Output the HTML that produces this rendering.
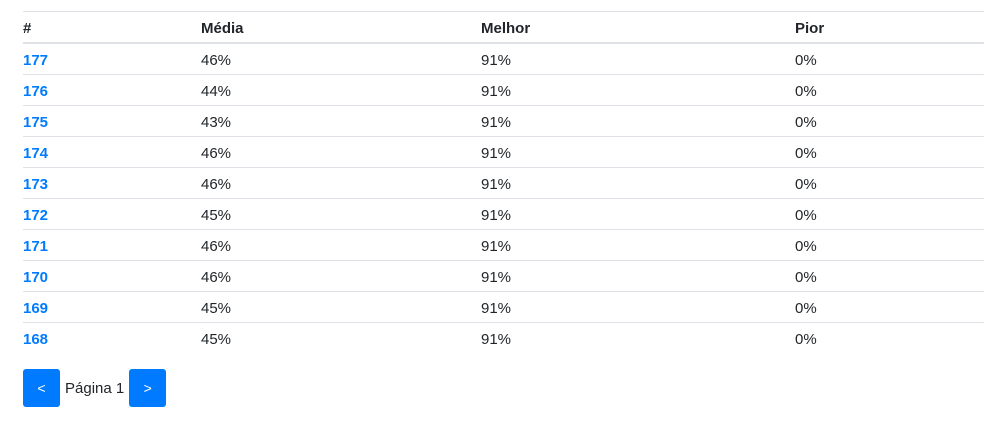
<!DOCTYPE html>
<html><head><meta charset="utf-8"><style>
body{margin:0;background:#fff;font-family:"Liberation Sans",Arial,sans-serif;font-size:15px;color:#212529;}
table{position:absolute;left:23px;top:11px;width:961px;border-collapse:collapse;}
td,th{height:27px;line-height:27px;padding:3px 0 0 0;text-align:left;border-top:1px solid #dee2e6;vertical-align:top;}
th{font-weight:bold;border-bottom:2px solid #dee2e6;}
tr.first td{border-top:0;}
td a{color:#007bff;font-weight:bold;text-decoration:none;}
.c1{width:178px}.c2{width:280px}.c3{width:314px}
.pg{position:absolute;top:369px;left:23px;display:flex;align-items:center;}
.b{width:37px;height:38px;background:#007bff;color:#fff;border-radius:3px;display:flex;align-items:center;justify-content:center;font-size:14px;}
.pg span{margin:0 5px 0 5px;font-size:15px;}
</style></head><body>
<table>
<tr><th class="c1">#</th><th class="c2">Média</th><th class="c3">Melhor</th><th>Pior</th></tr>
<tr class="first"><td><a>177</a></td><td>46%</td><td>91%</td><td>0%</td></tr>
<tr><td><a>176</a></td><td>44%</td><td>91%</td><td>0%</td></tr>
<tr><td><a>175</a></td><td>43%</td><td>91%</td><td>0%</td></tr>
<tr><td><a>174</a></td><td>46%</td><td>91%</td><td>0%</td></tr>
<tr><td><a>173</a></td><td>46%</td><td>91%</td><td>0%</td></tr>
<tr><td><a>172</a></td><td>45%</td><td>91%</td><td>0%</td></tr>
<tr><td><a>171</a></td><td>46%</td><td>91%</td><td>0%</td></tr>
<tr><td><a>170</a></td><td>46%</td><td>91%</td><td>0%</td></tr>
<tr><td><a>169</a></td><td>45%</td><td>91%</td><td>0%</td></tr>
<tr><td><a>168</a></td><td>45%</td><td>91%</td><td>0%</td></tr>
</table>
<div class="pg"><div class="b">&lt;</div><span>Página 1</span><div class="b">&gt;</div></div>
</body></html>
